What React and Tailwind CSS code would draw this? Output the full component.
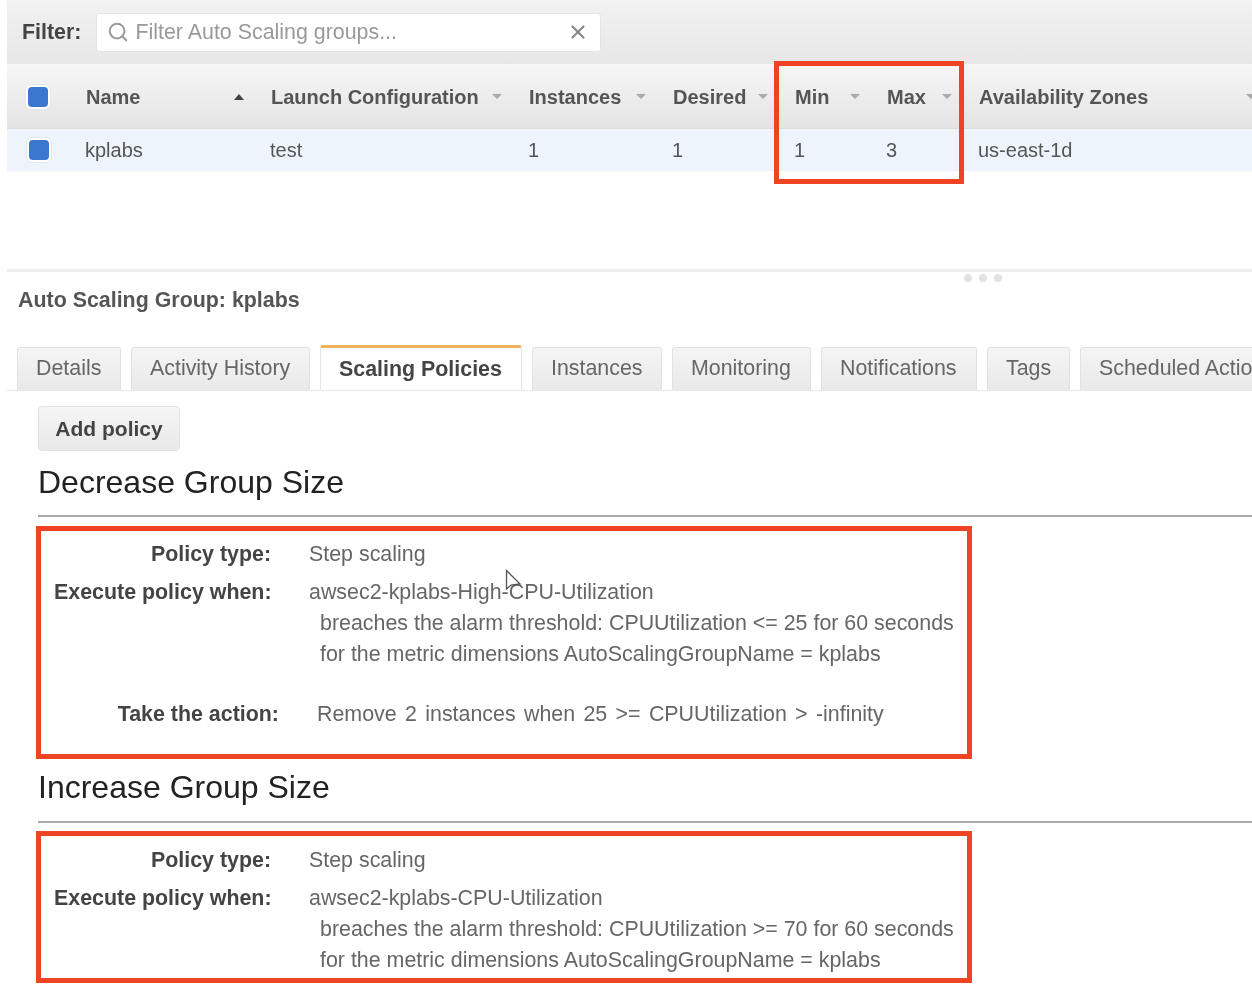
import { Search, X } from "lucide-react";

const columns = [
  { name: "Name", value: "kplabs", width: "w-[185px]", sort: "up" },
  { name: "Launch Configuration", value: "test", width: "w-[258px]" },
  { name: "Instances", value: "1", width: "w-[144px]" },
  { name: "Desired", value: "1", width: "w-[122px]" },
  { name: "Min", value: "1", width: "w-[92px]" },
  { name: "Max", value: "3", width: "w-[92px]" },
  { name: "Availability Zones", value: "us-east-1d", width: "w-[304px]" },
];

const tabs = [
  { label: "Details", width: "w-[104px]" },
  { label: "Activity History", width: "w-[179px]" },
  { label: "Scaling Policies", width: "w-[202px]", active: true },
  { label: "Instances", width: "w-[130px]" },
  { label: "Monitoring", width: "w-[139px]" },
  { label: "Notifications", width: "w-[156px]" },
  { label: "Tags", width: "w-[83px]" },
  { label: "Scheduled Actions", width: "w-[220px]" },
];

const Check = () => (
  <span className="flex h-[26px] w-[26px] items-center justify-center rounded-[6px] border border-[#e3e7ee] bg-white">
    <span className="h-[20px] w-[20px] rounded-[4px] bg-[#3a78cf]" />
  </span>
);

const Label = ({ children, wide }) => (
  <div className={`shrink-0 text-right font-bold whitespace-nowrap text-[#444] ${wide ? "w-[225px]" : "w-[217px]"}`}>{children}</div>
);

const Policy = ({ alarm, op, value, action, box, cursor }) => (
  <div className={`relative ml-[-2px] w-[936px] border-[5px] border-[#ee4423] pl-[13px] text-[21.4px] text-[#666] ${box}`}>
    <div className="flex h-[46px] items-center">
      <Label>Policy type:</Label>
      <span className="ml-[38px]">Step scaling</span>
    </div>
    <div className="flex h-[31px] items-center">
      <Label>Execute policy when:</Label>
      <span className="ml-[38px]">{alarm}</span>
    </div>
    <div className="ml-[266px] flex h-[31px] items-center leading-none whitespace-nowrap">
      breaches the alarm threshold: CPUUtilization {op} {value} for 60 seconds
    </div>
    <div className="ml-[266px] flex h-[31px] items-center leading-none whitespace-nowrap">
      for the metric dimensions AutoScalingGroupName = kplabs
    </div>
    {action && (
      <div className="mt-[29px] flex h-[31px] items-center">
        <Label wide>Take the action:</Label>
        <span className="ml-[38px] [word-spacing:2.4px]">{action}</span>
      </div>
    )}
    {cursor && (
      <svg className="absolute left-[464px] top-[38px]" width="18" height="26" viewBox="0 0 18 26">
        <path d="M1.5 1.5V20L6 16L15 15Z" fill="#fff" stroke="#555" strokeWidth="1.3" />
      </svg>
    )}
  </div>
);

export default function App() {
  return (
    <div className="relative h-[988px] w-[1252px] overflow-hidden bg-white pl-[7px] font-['Liberation_Sans',sans-serif] text-[20px] text-[#444] blur-[0.4px]">
      {/* filter bar */}
      <div className="flex h-[64px] items-center bg-gradient-to-b from-[#f2f2f2] to-[#e7e7e7] pl-[15px] text-[21.4px]">
        <span className="font-bold text-[#444]">Filter:</span>
        <div className="ml-[15px] flex h-[39px] w-[505px] items-center rounded-[3px] border border-[#e4e4e4] bg-white pl-[10px] pr-[11px] text-[#999]">
          <Search className="h-[22px] w-[22px] shrink-0 text-[#999]" strokeWidth={2.2} />
          <span className="ml-[6px] flex-1">Filter Auto Scaling groups...</span>
          <X className="h-[22px] w-[22px] text-[#888]" strokeWidth={2.4} />
        </div>
      </div>

      {/* table */}
      <div className="flex h-[65px] w-[1245px] items-center overflow-hidden border-b border-[#ddd] bg-gradient-to-b from-[#f6f6f6] to-[#e4e4e4] pt-[2px]">
        <div className="flex h-full w-[62px] shrink-0 items-center pl-[18px]">
          <Check />
        </div>
        {columns.map((c) => (
          <div key={c.name} className={`relative flex h-[30px] shrink-0 items-center pl-[17px] font-bold text-[#555] ${c.width}`}>
            {c.name}
            <span
              className={`absolute right-[10px] top-[12px] h-0 w-0 border-x-[5px] border-x-transparent ${
                c.sort ? "border-b-[6px] border-b-[#444]" : "border-t-[5px] border-t-[#aaa]"
              }`}
            />
          </div>
        ))}
      </div>
      <div className="flex h-[42px] w-[1245px] items-center overflow-hidden bg-[#eef4fc] text-[#555]">
        <div className="flex w-[61px] shrink-0 items-center pl-[19px]">
          <Check />
        </div>
        {columns.map((c) => (
          <div key={c.name} className={`shrink-0 pl-[17px] ${c.width}`}>
            {c.value}
          </div>
        ))}
      </div>

      {/* detail pane */}
      <div className="mt-[98px] border-t-[3px] border-[#eee] pl-[11px] text-[21.4px]">
        <div className="pt-[16px] font-bold leading-[24px] text-[#555]">Auto Scaling Group: kplabs</div>
        <div className="ml-[-11px] mt-[33px] flex h-[46px] items-end overflow-hidden border-b border-[#e8e8e8] pl-[10px]">
          {tabs.map((t) =>
            t.active ? (
              <div
                key={t.label}
                className={`mr-[10px] flex h-[46px] shrink-0 items-center border-x border-[#e6e6e6] border-t-[3px] border-t-[#edb158] bg-white pl-[18px] font-bold text-[#444] ${t.width} mb-[-1px] rounded-t-[3px] whitespace-nowrap`}
              >
                {t.label}
              </div>
            ) : (
              <div
                key={t.label}
                className={`flex h-[43px] shrink-0 items-center rounded-t-[3px] border border-b-0 border-[#e2e2e2] bg-gradient-to-b from-[#f5f5f5] to-[#e9e9e9] pb-[2px] pl-[18px] text-[#666] ${t.width} mr-[10px] whitespace-nowrap`}
              >
                {t.label}
              </div>
            ),
          )}
        </div>
        <div className="pl-[20px]">
          <div className="mt-[15px] flex h-[45px] w-[142px] items-center justify-center rounded-[4px] border border-[#e2e2e2] bg-gradient-to-b from-[#f6f6f6] to-[#e8e8e8] text-[21px] font-bold text-[#444]">
            Add policy
          </div>
          <h2 className="mt-[6px] h-[50px] text-[32px] leading-[50px] text-[#222]">Decrease Group Size</h2>
          <div className="mb-[9px] mt-[8px] h-[2px] w-[1214px] bg-[#aaa]" />
          <Policy
            cursor
            box="h-[233px]"
            alarm="awsec2-kplabs-High-CPU-Utilization"
            op="<="
            value="25"
            action="Remove 2 instances when 25 >= CPUUtilization > -infinity"
          />
          <h2 className="mt-[3px] h-[50px] text-[32px] leading-[50px] text-[#222]">Increase Group Size</h2>
          <div className="mb-[8px] mt-[9px] h-[2px] w-[1214px] bg-[#aaa]" />
          <Policy box="h-[152px] pt-[1px]" alarm="awsec2-kplabs-CPU-Utilization" op=">=" value="70" />
        </div>
      </div>

      {/* splitter dots */}
      <div className="absolute left-[964px] top-[274px] flex gap-[7px]">
        <span className="h-[8px] w-[8px] rounded-full bg-[#e2e2e2]" />
        <span className="h-[8px] w-[8px] rounded-full bg-[#e2e2e2]" />
        <span className="h-[8px] w-[8px] rounded-full bg-[#e2e2e2]" />
      </div>

      {/* highlight over Min / Max */}
      <div className="absolute left-[774px] top-[61px] h-[123px] w-[190px] border-[5px] border-[#ee4423]" />
    </div>
  );
}
